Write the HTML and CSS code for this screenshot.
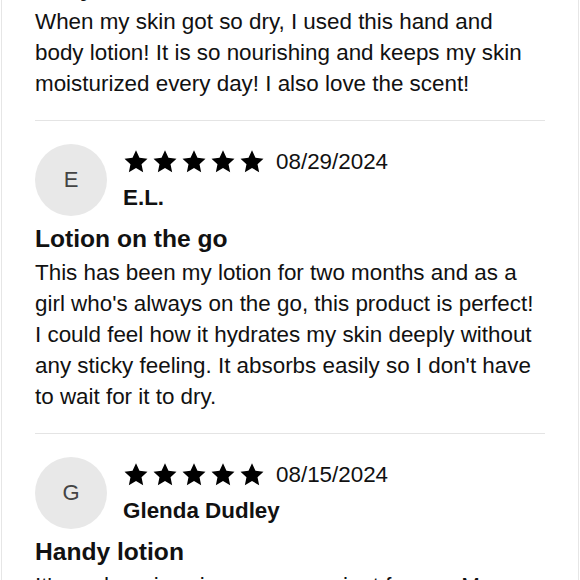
FILE: index.html
```html
<!DOCTYPE html>
<html lang="en">
<head>
<meta charset="utf-8">
<title>Reviews</title>
<link rel="stylesheet" href="styles.css">
</head>
<body>
<div class="frame">
  <div class="feed">
    <article class="review review-first">
      <h3 class="review-title">Daily essential</h3>
      <p class="review-text">When my skin got so dry, I used this hand and body lotion! It is so nourishing and keeps my skin moisturized every day! I also love the scent!</p>
    </article>

    <article class="review">
      <div class="review-head">
        <div class="avatar">E</div>
        <div class="meta">
          <div class="meta-top">
            <div class="stars">
              <svg class="star" viewBox="0 0 24 24"><path d="M12 1.2l3.2 6.9 7.4.8-5.5 5.1 1.5 7.4L12 17.6l-6.6 3.8 1.5-7.4-5.5-5.1 7.4-.8z"/></svg>
              <svg class="star" viewBox="0 0 24 24"><path d="M12 1.2l3.2 6.9 7.4.8-5.5 5.1 1.5 7.4L12 17.6l-6.6 3.8 1.5-7.4-5.5-5.1 7.4-.8z"/></svg>
              <svg class="star" viewBox="0 0 24 24"><path d="M12 1.2l3.2 6.9 7.4.8-5.5 5.1 1.5 7.4L12 17.6l-6.6 3.8 1.5-7.4-5.5-5.1 7.4-.8z"/></svg>
              <svg class="star" viewBox="0 0 24 24"><path d="M12 1.2l3.2 6.9 7.4.8-5.5 5.1 1.5 7.4L12 17.6l-6.6 3.8 1.5-7.4-5.5-5.1 7.4-.8z"/></svg>
              <svg class="star" viewBox="0 0 24 24"><path d="M12 1.2l3.2 6.9 7.4.8-5.5 5.1 1.5 7.4L12 17.6l-6.6 3.8 1.5-7.4-5.5-5.1 7.4-.8z"/></svg>
            </div>
            <span class="date">08/29/2024</span>
          </div>
          <div class="name">E.L.</div>
        </div>
      </div>
      <h3 class="review-title">Lotion on the go</h3>
      <p class="review-text">This has been my lotion for two months and as a girl who's always on the go, this product is perfect! I could feel how it hydrates my skin deeply without any sticky feeling. It absorbs easily so I don't have to wait for it to dry.</p>
    </article>

    <article class="review">
      <div class="review-head">
        <div class="avatar">G</div>
        <div class="meta">
          <div class="meta-top">
            <div class="stars">
              <svg class="star" viewBox="0 0 24 24"><path d="M12 1.2l3.2 6.9 7.4.8-5.5 5.1 1.5 7.4L12 17.6l-6.6 3.8 1.5-7.4-5.5-5.1 7.4-.8z"/></svg>
              <svg class="star" viewBox="0 0 24 24"><path d="M12 1.2l3.2 6.9 7.4.8-5.5 5.1 1.5 7.4L12 17.6l-6.6 3.8 1.5-7.4-5.5-5.1 7.4-.8z"/></svg>
              <svg class="star" viewBox="0 0 24 24"><path d="M12 1.2l3.2 6.9 7.4.8-5.5 5.1 1.5 7.4L12 17.6l-6.6 3.8 1.5-7.4-5.5-5.1 7.4-.8z"/></svg>
              <svg class="star" viewBox="0 0 24 24"><path d="M12 1.2l3.2 6.9 7.4.8-5.5 5.1 1.5 7.4L12 17.6l-6.6 3.8 1.5-7.4-5.5-5.1 7.4-.8z"/></svg>
              <svg class="star" viewBox="0 0 24 24"><path d="M12 1.2l3.2 6.9 7.4.8-5.5 5.1 1.5 7.4L12 17.6l-6.6 3.8 1.5-7.4-5.5-5.1 7.4-.8z"/></svg>
            </div>
            <span class="date">08/15/2024</span>
          </div>
          <div class="name">Glenda Dudley</div>
        </div>
      </div>
      <h3 class="review-title">Handy lotion</h3>
      <p class="review-text">It's such a nice size, so convenient for me. My hands always feel soft and smooth after using it, and the scent is so light and fresh.</p>
    </article>
  </div>
</div>
</body>
</html>
```

FILE: styles.css
```css
html, body {
  margin: 0;
  padding: 0;
  background: #ffffff;
  height: 100%;
  overflow: hidden;
}

body {
  font-family: "Liberation Sans", Arial, Helvetica, sans-serif;
  color: #111111;
}

.frame {
  margin: 0 1px;
  height: 100%;
  border-left: 1px solid #e6e6e6;
  border-right: 1px solid #e6e6e6;
  overflow: hidden;
}

.feed {
  margin-top: -28px;
  padding: 0 33px;
}

.review {
  padding: 23px 0 21px;
  border-bottom: 1px solid #e4e4e4;
}

.review-first {
  padding-top: 0;
}

.review-head {
  display: flex;
  align-items: flex-start;
  gap: 16px;
}

.avatar {
  width: 72px;
  height: 72px;
  border-radius: 50%;
  background: #e8e8e8;
  color: #444444;
  font-size: 22px;
  display: flex;
  align-items: center;
  justify-content: center;
  flex: none;
}

.meta {
  display: flex;
  flex-direction: column;
  gap: 5px;
  padding-top: 2px;
}

.meta-top {
  display: flex;
  align-items: center;
  gap: 11px;
  height: 31px;
}

.stars {
  display: flex;
  gap: 3px;
}

.star {
  width: 26px;
  height: 26px;
  fill: #000000;
  display: block;
}

.date {
  font-size: 22.4px;
  line-height: 31px;
  color: #111111;
}

.name {
  font-size: 22.4px;
  line-height: 31px;
  font-weight: bold;
  color: #111111;
}

.review-title {
  margin: 7px 0 3px;
  font-size: 24.6px;
  line-height: 31px;
  font-weight: bold;
  color: #111111;
}

.review-first .review-title {
  margin-top: 0;
}

.review-text {
  margin: 0;
  padding-right: 8px;
  font-size: 22.4px;
  line-height: 31px;
  color: #111111;
}
```
